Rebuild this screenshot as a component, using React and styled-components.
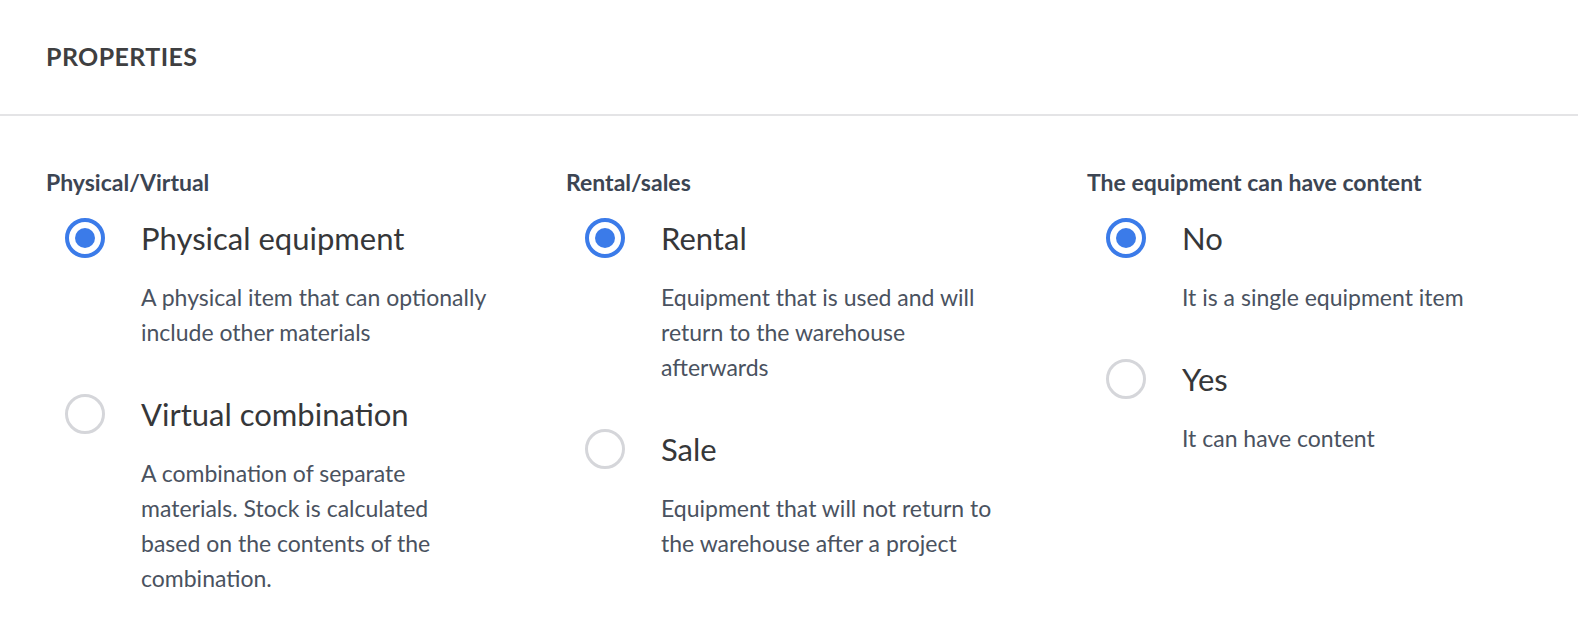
import React from "react";
import styled, { createGlobalStyle } from "styled-components";

const GlobalStyle = createGlobalStyle`
  html, body {
    margin: 0;
    padding: 0;
    background: #ffffff;
    overflow: hidden;
  }
  body {
    font-family: Lato, "Open Sans", sans-serif;
    -webkit-font-smoothing: antialiased;
  }
`;

const Panel = styled.section`
  width: 100%;
  background: #ffffff;
`;

const Header = styled.header`
  height: 116px;
  padding: 0 46px 2px;
  display: flex;
  align-items: center;
  border-bottom: 2px solid #e4e4e6;
  box-sizing: border-box;
`;

const Title = styled.h2`
  margin: 0;
  font-size: 25px;
  font-weight: 700;
  letter-spacing: 0.4px;
  color: #3f3f41;
  text-transform: uppercase;
`;

const Body = styled.div`
  display: grid;
  grid-template-columns: 520px 521px 1fr;
  padding: 52px 46px 20px;
`;

const Group = styled.div`
  display: flex;
  flex-direction: column;
`;

const GroupLabel = styled.div`
  font-size: 23px;
  line-height: 28px;
  font-weight: 700;
  color: #3c4553;
  margin-bottom: 22px;
`;

const Option = styled.label`
  display: flex;
  flex-direction: column;
  padding-left: 19px;
  margin-bottom: 44px;
  cursor: pointer;

  &:last-child {
    margin-bottom: 0;
  }
`;

const OptionRow = styled.div`
  display: flex;
  align-items: center;
  height: 40px;
`;

const Radio = styled.span`
  width: 40px;
  height: 40px;
  box-sizing: border-box;
  border-radius: 50%;
  border: ${p => (p.checked ? "4px solid #3b7be9" : "3.5px solid #d5d6da")};
  display: flex;
  align-items: center;
  justify-content: center;
  flex-shrink: 0;
  margin-right: 36px;

  &::after {
    content: "";
    width: 20px;
    height: 20px;
    border-radius: 50%;
    background: #3b7be9;
    display: ${p => (p.checked ? "block" : "none")};
  }
`;

const OptionTitle = styled.span`
  font-size: 31px;
  line-height: 40px;
  font-weight: 400;
  color: #363739;
`;

const Description = styled.p`
  margin: 22px 0 0 76px;
  font-size: 23px;
  line-height: 35px;
  color: #4a5260;
`;

const groups = [
  {
    label: "Physical/Virtual",
    options: [
      {
        title: "Physical equipment",
        checked: true,
        lines: ["A physical item that can optionally", "include other materials"]
      },
      {
        title: "Virtual combination",
        checked: false,
        lines: [
          "A combination of separate",
          "materials. Stock is calculated",
          "based on the contents of the",
          "combination."
        ]
      }
    ]
  },
  {
    label: "Rental/sales",
    options: [
      {
        title: "Rental",
        checked: true,
        lines: [
          "Equipment that is used and will",
          "return to the warehouse",
          "afterwards"
        ]
      },
      {
        title: "Sale",
        checked: false,
        lines: ["Equipment that will not return to", "the warehouse after a project"]
      }
    ]
  },
  {
    label: "The equipment can have content",
    options: [
      { title: "No", checked: true, lines: ["It is a single equipment item"] },
      { title: "Yes", checked: false, lines: ["It can have content"] }
    ]
  }
];

const App = () => {
  return (
    <Panel>
      <GlobalStyle />
      <Header>
        <Title>Properties</Title>
      </Header>
      <Body>
        {groups.map(group => (
          <Group key={group.label}>
            <GroupLabel>{group.label}</GroupLabel>
            {group.options.map(option => (
              <Option key={option.title}>
                <OptionRow>
                  <Radio checked={option.checked} />
                  <OptionTitle>{option.title}</OptionTitle>
                </OptionRow>
                <Description>
                  {option.lines.map((line, idx) => (
                    <React.Fragment key={idx}>
                      {idx > 0 && <br />}
                      {line}
                    </React.Fragment>
                  ))}
                </Description>
              </Option>
            ))}
          </Group>
        ))}
      </Body>
    </Panel>
  );
};

export default App;
